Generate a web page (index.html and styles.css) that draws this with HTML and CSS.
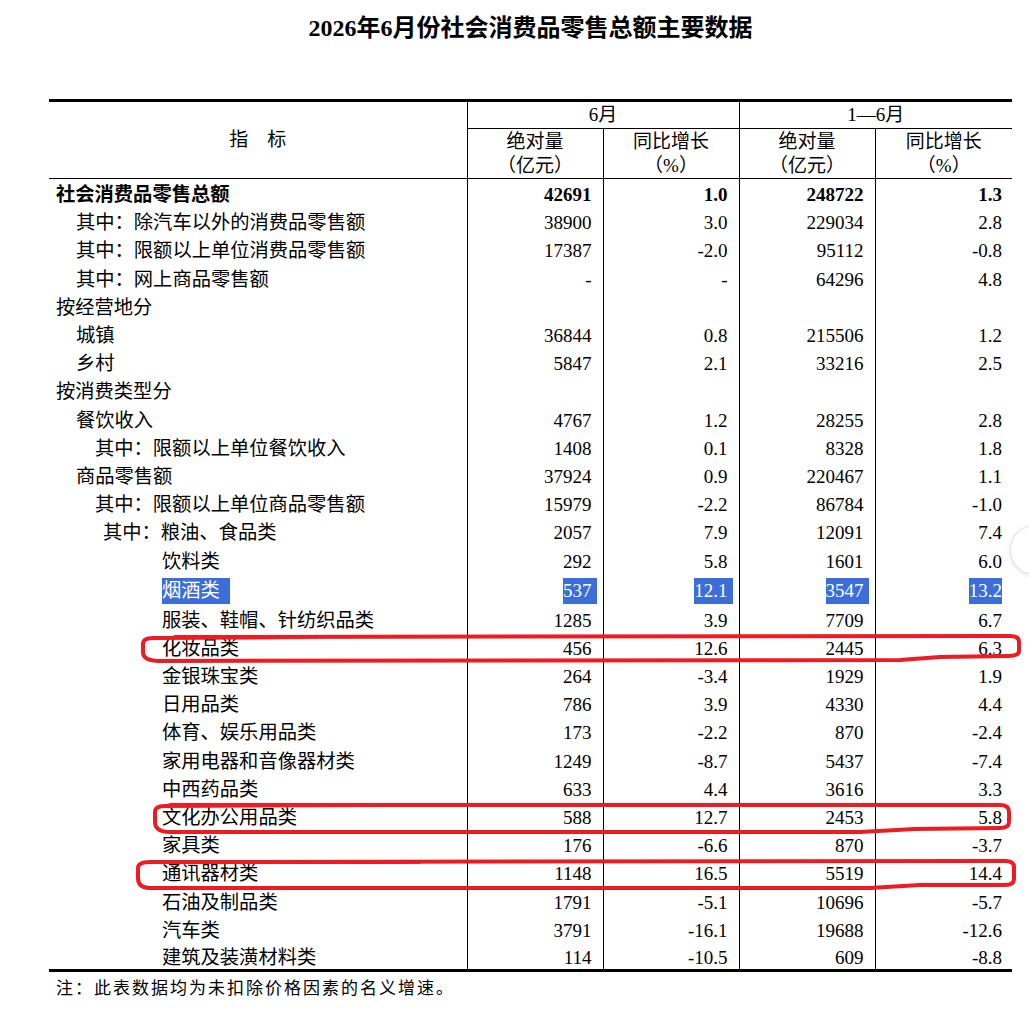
FILE: index.html
```html
<!DOCTYPE html>
<html lang="zh-CN">
<head>
<meta charset="utf-8">
<title>2026年6月份社会消费品零售总额主要数据</title>
<link rel="stylesheet" href="styles.css">
</head>
<body>
<div class="page">
  <h1 class="title">2026年6月份社会消费品零售总额主要数据</h1>
  <table class="data">
    <colgroup>
      <col class="w-label"><col class="w-num"><col class="w-num"><col class="w-num"><col class="w-last">
    </colgroup>
    <thead>
      <tr class="h1">
        <th rowspan="2" class="hlabel">指　标</th>
        <th colspan="2" class="hgroup">6月</th>
        <th colspan="2" class="hgroup">1—6月</th>
      </tr>
      <tr class="h2">
        <th class="hsub">绝对量<br>（亿元）</th>
        <th class="hsub">同比增长<br>（%）</th>
        <th class="hsub">绝对量<br>（亿元）</th>
        <th class="hsub">同比增长<br>（%）</th>
      </tr>
    </thead>
    <tbody>
      <tr class="bold"><td class="lab l0">社会消费品零售总额</td><td>42691</td><td>1.0</td><td>248722</td><td>1.3</td></tr>
      <tr><td class="lab l1">其中：除汽车以外的消费品零售额</td><td>38900</td><td>3.0</td><td>229034</td><td>2.8</td></tr>
      <tr><td class="lab l1">其中：限额以上单位消费品零售额</td><td>17387</td><td>-2.0</td><td>95112</td><td>-0.8</td></tr>
      <tr><td class="lab l1">其中：网上商品零售额</td><td>-</td><td>-</td><td>64296</td><td>4.8</td></tr>
      <tr><td class="lab l0">按经营地分</td><td></td><td></td><td></td><td></td></tr>
      <tr><td class="lab l1">城镇</td><td>36844</td><td>0.8</td><td>215506</td><td>1.2</td></tr>
      <tr><td class="lab l1">乡村</td><td>5847</td><td>2.1</td><td>33216</td><td>2.5</td></tr>
      <tr><td class="lab l0">按消费类型分</td><td></td><td></td><td></td><td></td></tr>
      <tr><td class="lab l1">餐饮收入</td><td>4767</td><td>1.2</td><td>28255</td><td>2.8</td></tr>
      <tr><td class="lab l2">其中：限额以上单位餐饮收入</td><td>1408</td><td>0.1</td><td>8328</td><td>1.8</td></tr>
      <tr><td class="lab l1">商品零售额</td><td>37924</td><td>0.9</td><td>220467</td><td>1.1</td></tr>
      <tr><td class="lab l2">其中：限额以上单位商品零售额</td><td>15979</td><td>-2.2</td><td>86784</td><td>-1.0</td></tr>
      <tr><td class="lab l3">其中：粮油、食品类</td><td>2057</td><td>7.9</td><td>12091</td><td>7.4</td></tr>
      <tr><td class="lab l4">饮料类</td><td>292</td><td>5.8</td><td>1601</td><td>6.0</td></tr>
      <tr class="sel"><td class="lab l4"><span class="hl hl-lab">烟酒类</span></td><td><span class="hl hl-trail">537</span></td><td><span class="hl hl-trail">12.1</span></td><td><span class="hl hl-trail">3547</span></td><td><span class="hl">13.2</span></td></tr>
      <tr><td class="lab l4">服装、鞋帽、针纺织品类</td><td>1285</td><td>3.9</td><td>7709</td><td>6.7</td></tr>
      <tr><td class="lab l4">化妆品类</td><td>456</td><td>12.6</td><td>2445</td><td>6.3</td></tr>
      <tr><td class="lab l4">金银珠宝类</td><td>264</td><td>-3.4</td><td>1929</td><td>1.9</td></tr>
      <tr><td class="lab l4">日用品类</td><td>786</td><td>3.9</td><td>4330</td><td>4.4</td></tr>
      <tr><td class="lab l4">体育、娱乐用品类</td><td>173</td><td>-2.2</td><td>870</td><td>-2.4</td></tr>
      <tr><td class="lab l4">家用电器和音像器材类</td><td>1249</td><td>-8.7</td><td>5437</td><td>-7.4</td></tr>
      <tr><td class="lab l4">中西药品类</td><td>633</td><td>4.4</td><td>3616</td><td>3.3</td></tr>
      <tr><td class="lab l4">文化办公用品类</td><td>588</td><td>12.7</td><td>2453</td><td>5.8</td></tr>
      <tr><td class="lab l4">家具类</td><td>176</td><td>-6.6</td><td>870</td><td>-3.7</td></tr>
      <tr><td class="lab l4">通讯器材类</td><td>1148</td><td>16.5</td><td>5519</td><td>14.4</td></tr>
      <tr><td class="lab l4">石油及制品类</td><td>1791</td><td>-5.1</td><td>10696</td><td>-5.7</td></tr>
      <tr><td class="lab l4">汽车类</td><td>3791</td><td>-16.1</td><td>19688</td><td>-12.6</td></tr>
      <tr><td class="lab l4">建筑及装潢材料类</td><td>114</td><td>-10.5</td><td>609</td><td>-8.8</td></tr>
    </tbody>
  </table>
  <p class="note">注：此表数据均为未扣除价格因素的名义增速。</p>
</div>

<svg class="marks" width="1029" height="1020" viewBox="0 0 1029 1020" aria-hidden="true">
  <path d="M175 637 L1010 636 Q1019 636 1019 642 L1019 651 Q1019 656 1008 656 L940 657 L900 660 L160 661 Q143 661 143 652 L143 644 Q143 638 153 638 L330 637"/>
  <path d="M170 805 L1000 805 Q1009 805 1009 812 L1009 822 Q1009 828 1000 828 L915 829 L860 832 L170 832 Q155 832 155 822 L155 812 Q155 806 165 806 L400 805"/>
  <path d="M160 862 L1005 861 Q1014 861 1014 867 L1014 879 Q1014 885 1005 885 L920 885 L870 888 L150 888 Q138 888 138 878 L138 868 Q138 862 150 862 L420 862"/>
</svg>

<div class="float-btn"></div>
</body>
</html>
```

FILE: styles.css
```css
html, body {
  margin: 0;
  padding: 0;
  background: #fff;
  overflow-x: hidden;
}

body {
  font-family: "Liberation Serif", "Noto Sans CJK SC", serif;
  color: #000;
}

.page {
  width: 963px;
  padding: 12px 0 0 49px;
}

.title {
  margin: 0;
  font-size: 24px;
  line-height: 32px;
  font-weight: bold;
  text-align: center;
}

.data {
  margin-top: 55px;
  width: 963px;
  table-layout: fixed;
  border-collapse: collapse;
  border-top: 3px solid #000;
  border-bottom: 3px solid #000;
}

.w-label { width: 418px; }
.w-num { width: 136px; }
.w-last { width: 137px; }

th {
  font-weight: normal;
  font-size: 19px;
  padding: 0;
  text-align: center;
  vertical-align: middle;
}

.hlabel {
  border-bottom: 1px solid #000;
  line-height: 24px;
}

.hgroup {
  height: 26px;
  line-height: 24px;
  border-left: 1px solid #000;
  border-bottom: 1px solid #000;
}

.hsub {
  height: 49px;
  line-height: 24px;
  border-left: 1px solid #000;
  border-bottom: 1px solid #000;
}

.data tbody tr {
  height: 28.2px;
}

td {
  padding: 5px 11px 0 0;
  font-size: 19px;
  line-height: 22px;
  text-align: right;
  vertical-align: middle;
  border-left: 1px solid #000;
  white-space: nowrap;
}

td:last-child {
  padding-right: 10px;
}

td.lab {
  text-align: left;
  border-left: none;
  padding-right: 0;
  font-size: 19.3px;
}

.l0 { padding-left: 7px; }
.l1 { padding-left: 27px; }
.l2 { padding-left: 46px; }
.l3 { padding-left: 54px; }
.l4 { padding-left: 113px; }

.bold td {
  font-weight: bold;
}

.hl {
  display: inline-block;
  background: #3b6ed8;
  color: #fff;
  line-height: 26px;
  vertical-align: middle;
}

.hl-trail {
  padding-right: 5px;
  margin-right: -5px;
}

.hl-lab {
  padding-right: 10px;
}

.note {
  margin: 4px 0 0 0;
  padding-left: 7px;
  font-family: "Noto Sans CJK SC", sans-serif;
  font-size: 17px;
  letter-spacing: 2px;
  line-height: 22px;
}

.marks {
  position: absolute;
  top: 0;
  left: 0;
  pointer-events: none;
}

.marks path {
  fill: none;
  stroke: #ec1c24;
  stroke-width: 4;
  stroke-linejoin: round;
  stroke-linecap: round;
}

.float-btn {
  position: fixed;
  left: 1010px;
  top: 525px;
  width: 48px;
  height: 48px;
  border-radius: 50%;
  background: #fff;
  border: 1px solid #e2e2e2;
  box-shadow: 0 1px 5px rgba(0, 0, 0, 0.12);
}
```
